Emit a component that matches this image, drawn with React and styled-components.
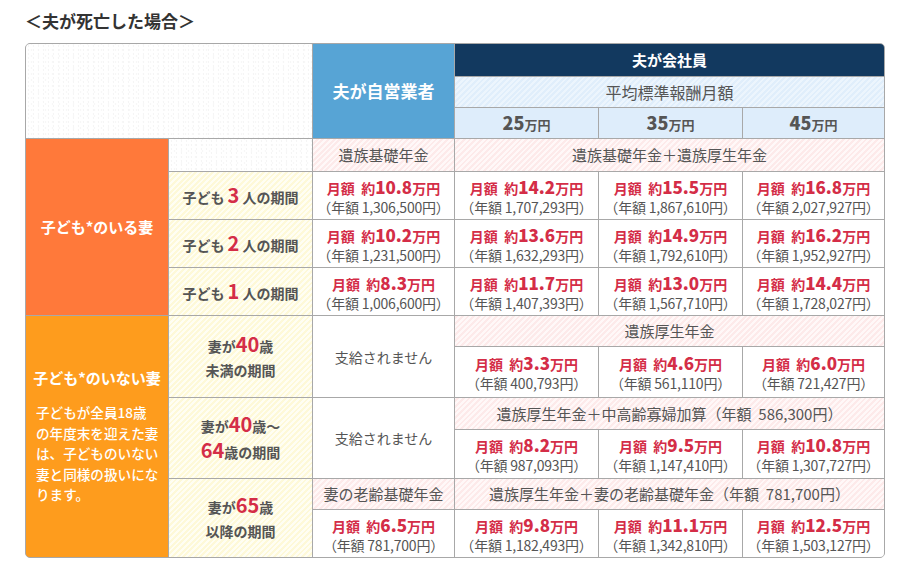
import React from "react";
import styled, {createGlobalStyle, css} from "styled-components";

const GlobalStyle = createGlobalStyle`
  body {
    margin: 0;
    background: #fff;
    font-family: "Noto Sans CJK JP", "Noto Sans", sans-serif;
    color: #555;
  }
`;

const Page = styled.div`
  padding: 9px 0 0 25px;
`;

const Title = styled.h2`
  margin: 0 0 10px 0;
  font-size: 17px;
  line-height: 24px;
  font-weight: bold;
  color: #333;
`;

const Table = styled.div`
  display: grid;
  grid-template-columns: 142px 143px 141px 143px 143px 141px;
  grid-template-rows: 32px 30px 30px 32px 47px 47px 47px 30px 50px 31px 48px 30px 47px;
  gap: 1px;
  width: max-content;
  background: #a8a8a8;
  border: 1px solid #a8a8a8;
  border-radius: 5px;
  overflow: hidden;
`;

const tones = {
  plain: css`background: #fff;`,
  texture: css`
    background-color: #fff;
    background-image:
      radial-gradient(#f5f5f5 0.8px, transparent 1.2px),
      radial-gradient(#f7f7f7 0.8px, transparent 1.2px);
    background-size: 5px 4px, 7px 6px;
    background-position: 0 0, 2px 3px;
  `,
  navy: css`background: #12395f; color: #fff;`,
  blue: css`background: #57a4d5; color: #fff;`,
  sky: css`
    background: repeating-linear-gradient(-45deg, #ecf5fd 0 2px, #e0eefb 2px 4px);
  `,
  skyPlain: css`background: #deedfb;`,
  pink: css`
    background: repeating-linear-gradient(-45deg, #fff8f8 0 2px, #fdeaea 2px 4px);
  `,
  yellow: css`
    background: repeating-linear-gradient(-45deg, #fffef3 0 2px, #fef9d8 2px 4px);
  `,
  orange: css`background: #ff793a; color: #fff;`,
  amber: css`background: #fe9c1d; color: #fff;`,
};

const Cell = styled.div`
  grid-column: ${(p) => p.$c};
  grid-row: ${(p) => p.$r};
  display: flex;
  flex-direction: column;
  align-items: center;
  justify-content: center;
  text-align: center;
  white-space: nowrap;
  font-size: ${(p) => p.$size || "14px"};
  line-height: 20px;
  ${(p) => tones[p.$tone || "plain"]}
`;

const HeadBig = styled.span`
  font-size: 17px;
  font-weight: bold;
`;

const HeadMid = styled.span`
  font-size: 15px;
  font-weight: bold;
`;

const Salary = styled.span`
  font-size: 13px;
  font-weight: bold;
  color: #555;
  b {
    font-size: 18px;
  }
`;

const Label = styled.div`
  font-size: 14px;
  font-weight: bold;
  color: #555;
  line-height: 24px;
  em {
    font-style: normal;
    color: #d42d47;
    font-size: 20px;
    margin: 0 ${(p) => (p.$spaced ? "3px" : "0")};
  }
`;

const Monthly = styled.div`
  color: #d42d47;
  font-weight: bold;
  font-size: 14px;
  line-height: 21px;
  b {
    font-size: 17px;
  }
`;

const Annual = styled.div`
  color: #555;
  font-size: 14px;
  line-height: 17px;
  letter-spacing: -0.2px;
`;

const GroupTitle = styled.div`
  font-size: 15px;
  font-weight: bold;
  color: #fff;
`;

const Note = styled.div`
  margin-top: 14px;
  font-size: 13.6px;
  line-height: 20.5px;
  font-weight: 500;
  text-align: left;
  align-self: stretch;
  padding-left: 10px;
`;

const Money = ({m, y}) => (
  <>
    <Monthly>月額&nbsp;&nbsp;約<b>{m}</b>万円</Monthly>
    <Annual>（年額 {y}円）</Annual>
  </>
);

const rowsWith = [
  {n: "3", vals: [["10.8", "1,306,500"], ["14.2", "1,707,293"], ["15.5", "1,867,610"], ["16.8", "2,027,927"]]},
  {n: "2", vals: [["10.2", "1,231,500"], ["13.6", "1,632,293"], ["14.9", "1,792,610"], ["16.2", "1,952,927"]]},
  {n: "1", vals: [["8.3", "1,006,600"], ["11.7", "1,407,393"], ["13.0", "1,567,710"], ["14.4", "1,728,027"]]},
];

const under40 = [["3.3", "400,793"], ["4.6", "561,110"], ["6.0", "721,427"]];
const mid = [["8.2", "987,093"], ["9.5", "1,147,410"], ["10.8", "1,307,727"]];
const over65 = [["6.5", "781,700"], ["9.8", "1,182,493"], ["11.1", "1,342,810"], ["12.5", "1,503,127"]];

const App = () => {
  return <Page>
    <GlobalStyle/>
    <Title>＜夫が死亡した場合＞</Title>
    <Table>
      <Cell $c="1 / 3" $r="1 / 4" $tone="texture"/>
      <Cell $c="3" $r="1 / 4" $tone="blue"><HeadBig>夫が自営業者</HeadBig></Cell>
      <Cell $c="4 / 7" $r="1" $tone="navy"><HeadMid>夫が会社員</HeadMid></Cell>
      <Cell $c="4 / 7" $r="2" $tone="sky" $size="16px">平均標準報酬月額</Cell>
      {["25", "35", "45"].map((s, i) => (
        <Cell key={s} $c={4 + i} $r="3" $tone="skyPlain"><Salary><b>{s}</b>万円</Salary></Cell>
      ))}

      <Cell $c="1" $r="4 / 8" $tone="orange"><GroupTitle>子ども*のいる妻</GroupTitle></Cell>
      <Cell $c="2" $r="4" $tone="texture"/>
      <Cell $c="3" $r="4" $tone="pink" $size="15px">遺族基礎年金</Cell>
      <Cell $c="4 / 7" $r="4" $tone="pink" $size="15px">遺族基礎年金＋遺族厚生年金</Cell>
      {rowsWith.map((row, ri) => (
        <React.Fragment key={row.n}>
          <Cell $c="2" $r={5 + ri} $tone="yellow">
            <Label $spaced>子ども<em>{row.n}</em>人の期間</Label>
          </Cell>
          {row.vals.map(([m, y], ci) => (
            <Cell key={ci} $c={3 + ci} $r={5 + ri}><Money m={m} y={y}/></Cell>
          ))}
        </React.Fragment>
      ))}

      <Cell $c="1" $r="8 / 14" $tone="amber">
        <GroupTitle>子ども*のいない妻</GroupTitle>
        <Note>
          子どもが全員18歳<br/>
          の年度末を迎えた妻<br/>
          は、子どものいない<br/>
          妻と同様の扱いにな<br/>
          ります。
        </Note>
      </Cell>

      <Cell $c="2" $r="8 / 10" $tone="yellow">
        <Label>妻が<em>40</em>歳<br/>未満の期間</Label>
      </Cell>
      <Cell $c="3" $r="8 / 10">支給されません</Cell>
      <Cell $c="4 / 7" $r="8" $tone="pink" $size="15px">遺族厚生年金</Cell>
      {under40.map(([m, y], i) => (
        <Cell key={i} $c={4 + i} $r="9"><Money m={m} y={y}/></Cell>
      ))}

      <Cell $c="2" $r="10 / 12" $tone="yellow">
        <Label>妻が<em>40</em>歳～<br/><em>64</em>歳の期間</Label>
      </Cell>
      <Cell $c="3" $r="10 / 12">支給されません</Cell>
      <Cell $c="4 / 7" $r="10" $tone="pink" $size="15px">遺族厚生年金＋中高齢寡婦加算（年額&nbsp;&nbsp;586,300円）</Cell>
      {mid.map(([m, y], i) => (
        <Cell key={i} $c={4 + i} $r="11"><Money m={m} y={y}/></Cell>
      ))}

      <Cell $c="2" $r="12 / 14" $tone="yellow">
        <Label>妻が<em>65</em>歳<br/>以降の期間</Label>
      </Cell>
      <Cell $c="3" $r="12" $tone="pink" $size="15px">妻の老齢基礎年金</Cell>
      <Cell $c="4 / 7" $r="12" $tone="pink" $size="15px">遺族厚生年金＋妻の老齢基礎年金（年額&nbsp;&nbsp;781,700円）</Cell>
      {over65.map(([m, y], i) => (
        <Cell key={i} $c={3 + i} $r="13"><Money m={m} y={y}/></Cell>
      ))}
    </Table>
  </Page>
};

export default App;
